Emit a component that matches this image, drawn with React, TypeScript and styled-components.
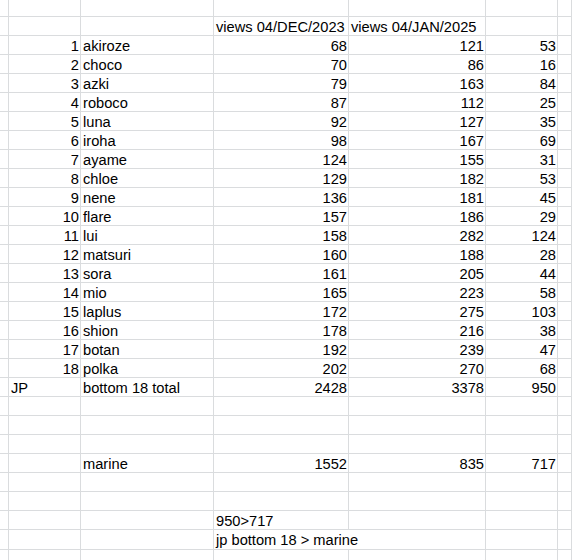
import React from "react";
import styled, { createGlobalStyle } from "styled-components";

const GlobalStyle = createGlobalStyle`
  html, body {
    margin: 0;
    padding: 0;
    background: #ffffff;
  }
  body {
    width: 572px;
    height: 560px;
    overflow: hidden;
  }
`;

const GRID = "#dadcde";

const Sheet = styled.div`
  display: flex;
  flex-direction: column;
  width: 572px;
  height: 560px;
  overflow: hidden;
  background: #ffffff;
  font-family: "Liberation Sans", Arial, sans-serif;
  font-size: 14.67px;
  color: #000000;
`;

const Row = styled.div<{ $height: number }>`
  display: grid;
  grid-template-columns: 9px 72px 133px 135px 137px 72px 1fr;
  height: ${(p) => p.$height}px;
  flex: none;
`;

const Cell = styled.div<{ $align?: "left" | "right"; $spill?: boolean }>`
  box-sizing: border-box;
  border-right: 1px solid ${(p) => (p.$spill ? "transparent" : GRID)};
  border-bottom: 1px solid ${GRID};
  padding: 2px 1px 0 2px;
  line-height: 17px;
  white-space: nowrap;
  overflow: ${(p) => (p.$spill ? "visible" : "hidden")};
  text-align: ${(p) => p.$align ?? "left"};
  position: relative;
  z-index: ${(p) => (p.$spill ? 1 : 0)};
`;

type CellDef = { text?: string | number; align?: "left" | "right"; spill?: boolean };

const members: [string, number, number][] = [
  ["akiroze", 68, 121],
  ["choco", 70, 86],
  ["azki", 79, 163],
  ["roboco", 87, 112],
  ["luna", 92, 127],
  ["iroha", 98, 167],
  ["ayame", 124, 155],
  ["chloe", 129, 182],
  ["nene", 136, 181],
  ["flare", 157, 186],
  ["lui", 158, 282],
  ["matsuri", 160, 188],
  ["sora", 161, 205],
  ["mio", 165, 223],
  ["laplus", 172, 275],
  ["shion", 178, 216],
  ["botan", 192, 239],
  ["polka", 202, 270],
];

const empty = (): CellDef[] => [{}, {}, {}, {}, {}, {}, {}];

const rows: { height: number; cells: CellDef[] }[] = [
  { height: 17, cells: empty() },
  {
    height: 19,
    cells: [
      {},
      {},
      {},
      { text: "views 04/DEC/2023" },
      { text: "views 04/JAN/2025" },
      {},
      {},
    ],
  },
  ...members.map(([name, dec, jan], i) => ({
    height: 19,
    cells: [
      {},
      { text: i + 1, align: "right" as const },
      { text: name },
      { text: dec, align: "right" as const },
      { text: jan, align: "right" as const },
      { text: jan - dec, align: "right" as const },
      {},
    ],
  })),
  {
    height: 19,
    cells: [
      {},
      { text: "JP" },
      { text: "bottom 18 total" },
      { text: 2428, align: "right" },
      { text: 3378, align: "right" },
      { text: 950, align: "right" },
      {},
    ],
  },
  { height: 19, cells: empty() },
  { height: 19, cells: empty() },
  { height: 19, cells: empty() },
  {
    height: 19,
    cells: [
      {},
      {},
      { text: "marine" },
      { text: 1552, align: "right" },
      { text: 835, align: "right" },
      { text: 717, align: "right" },
      {},
    ],
  },
  { height: 19, cells: empty() },
  { height: 19, cells: empty() },
  {
    height: 19,
    cells: [{}, {}, {}, { text: "950>717" }, {}, {}, {}],
  },
  {
    height: 19,
    cells: [{}, {}, {}, { text: "jp bottom 18 > marine", spill: true }, {}, {}, {}],
  },
  { height: 19, cells: empty() },
];

export default function App() {
  return (
    <>
      <GlobalStyle />
      <Sheet>
        {rows.map((row, r) => (
          <Row key={r} $height={row.height}>
            {row.cells.map((c, ci) => (
              <Cell key={ci} $align={c.align} $spill={c.spill}>
                {c.text ?? ""}
              </Cell>
            ))}
          </Row>
        ))}
      </Sheet>
    </>
  );
}
